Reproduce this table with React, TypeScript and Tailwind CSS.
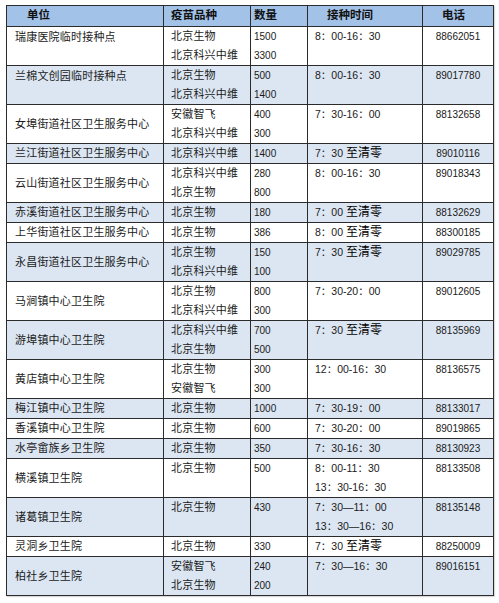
import React from 'react'

type Row = {
  name: string
  vaccines: string[]
  counts: string[]
  times: string[]
  phone: string
  nameTop?: boolean
}

const ROWS: Row[] = [
  { name: '瑞康医院临时接种点', vaccines: ['北京生物', '北京科兴中维'], counts: ['1500', '3300'], times: ['8：00-16：30'], phone: '88662051', nameTop: true },
  { name: '兰棉文创园临时接种点', vaccines: ['北京生物', '北京科兴中维'], counts: ['500', '1400'], times: ['8：00-16：30'], phone: '89017780', nameTop: true },
  { name: '女埠街道社区卫生服务中心', vaccines: ['安徽智飞', '北京科兴中维'], counts: ['400', '300'], times: ['7：30-16：00'], phone: '88132658' },
  { name: '兰江街道社区卫生服务中心', vaccines: ['北京科兴中维'], counts: ['1400'], times: ['7：30 至清零'], phone: '89010116' },
  { name: '云山街道社区卫生服务中心', vaccines: ['北京科兴中维', '北京生物'], counts: ['280', '800'], times: ['8：00-16：30'], phone: '89018343' },
  { name: '赤溪街道社区卫生服务中心', vaccines: ['北京生物'], counts: ['180'], times: ['7：00 至清零'], phone: '88132629' },
  { name: '上华街道社区卫生服务中心', vaccines: ['北京生物'], counts: ['386'], times: ['8：00 至清零'], phone: '88300185' },
  { name: '永昌街道社区卫生服务中心', vaccines: ['北京生物', '北京科兴中维'], counts: ['150', '100'], times: ['7：30 至清零'], phone: '89029785' },
  { name: '马涧镇中心卫生院', vaccines: ['北京生物', '北京科兴中维'], counts: ['800', '300'], times: ['7：30-20：00'], phone: '89012605' },
  { name: '游埠镇中心卫生院', vaccines: ['北京科兴中维', '北京生物'], counts: ['700', '500'], times: ['7：30 至清零'], phone: '88135969' },
  { name: '黄店镇中心卫生院', vaccines: ['北京生物', '安徽智飞'], counts: ['300', '300'], times: ['12：00-16：30'], phone: '88136575' },
  { name: '梅江镇中心卫生院', vaccines: ['北京生物'], counts: ['1000'], times: ['7：30-19：00'], phone: '88133017' },
  { name: '香溪镇中心卫生院', vaccines: ['北京生物'], counts: ['600'], times: ['7：30-20：00'], phone: '89019865' },
  { name: '水亭畲族乡卫生院', vaccines: ['北京生物'], counts: ['350'], times: ['7：30-16：30'], phone: '88130923' },
  { name: '横溪镇卫生院', vaccines: ['北京生物'], counts: ['500'], times: ['8：00-11：30', '13：30-16：30'], phone: '88133508' },
  { name: '诸葛镇卫生院', vaccines: ['北京生物'], counts: ['430'], times: ['7：30—11：00', '13：30—16：30'], phone: '88135148' },
  { name: '灵洞乡卫生院', vaccines: ['北京生物'], counts: ['330'], times: ['7：30 至清零'], phone: '88250009' },
  { name: '柏社乡卫生院', vaccines: ['安徽智飞', '北京生物'], counts: ['240', '200'], times: ['7：30—16：30'], phone: '89016151' },
]

function TimeText({ value }: { value: string }) {
  if (value.includes('至清零')) {
    const [head] = value.split(' ')
    return (
      <>
        {head} <span className="text-[12px] text-black">至清零</span>
      </>
    )
  }
  return <>{value}</>
}

function Lines({ items }: { items: string[] }) {
  return (
    <>
      {items.map((t, i) => (
        <div key={i} className="h-[19px] leading-[19px] whitespace-nowrap">{t}</div>
      ))}
    </>
  )
}

export default function App() {
  return (
    <div className="bg-white w-[499px] h-[603px] pt-[5px] pl-[6px] font-['Liberation_Sans','Noto_Sans_CJK_SC',sans-serif] text-[#1a1a1a]">
      <table className="border-collapse table-fixed w-[487px] border border-[#2b2b2b] shadow-[1px_1px_1px_rgba(0,0,0,0.15)]">
        <colgroup>
          <col className="w-[157px]" />
          <col className="w-[87px]" />
          <col className="w-[57px]" />
          <col className="w-[115px]" />
          <col className="w-[71px]" />
        </colgroup>
        <thead>
          <tr className="h-[21px] bg-[#a3c2e8] text-[11.5px] font-bold text-[#111]">
            <th className="border border-[#2b2b2b] text-left pl-[20px] py-0">单位</th>
            <th className="border border-[#2b2b2b] text-left pl-[7px] py-0">疫苗品种</th>
            <th className="border border-[#2b2b2b] text-left pl-[3px] py-0">数量</th>
            <th className="border border-[#2b2b2b] text-left pl-[19px] py-0">接种时间</th>
            <th className="border border-[#2b2b2b] text-left pl-[19px] py-0">电话</th>
          </tr>
        </thead>
        <tbody>
          {ROWS.map((r, i) => {
            const double = Math.max(r.vaccines.length, r.counts.length, r.times.length) > 1
            return (
              <tr
                key={r.name}
                className={`${double ? 'h-[39px]' : 'h-[20px]'} ${i % 2 === 1 ? 'bg-[#dce6f2]' : 'bg-white'}`}
              >
                <td
                  className={`border border-[#2b2b2b] pl-[8px] text-[11px] tracking-[0.2px] whitespace-nowrap ${
                    r.nameTop ? 'align-top leading-[19px] pt-[1px]' : 'align-middle leading-[19px]'
                  }`}
                >
                  {r.name}
                </td>
                <td className="border border-[#2b2b2b] pl-[7px] text-[11px] tracking-[0.2px] align-top pt-[0px]">
                  <Lines items={r.vaccines} />
                </td>
                <td className="border border-[#2b2b2b] pl-[3px] text-[10px] align-top">
                  <Lines items={r.counts} />
                </td>
                <td className="border border-[#2b2b2b] pl-[7px] text-[10.5px] align-top">
                  {r.times.map((t, k) => (
                    <div key={k} className="h-[19px] leading-[19px] whitespace-nowrap">
                      <TimeText value={t} />
                    </div>
                  ))}
                </td>
                <td className="border border-[#2b2b2b] text-center text-[10px] align-top">
                  <div className="h-[19px] leading-[19px]">{r.phone}</div>
                </td>
              </tr>
            )
          })}
        </tbody>
      </table>
    </div>
  )
}
